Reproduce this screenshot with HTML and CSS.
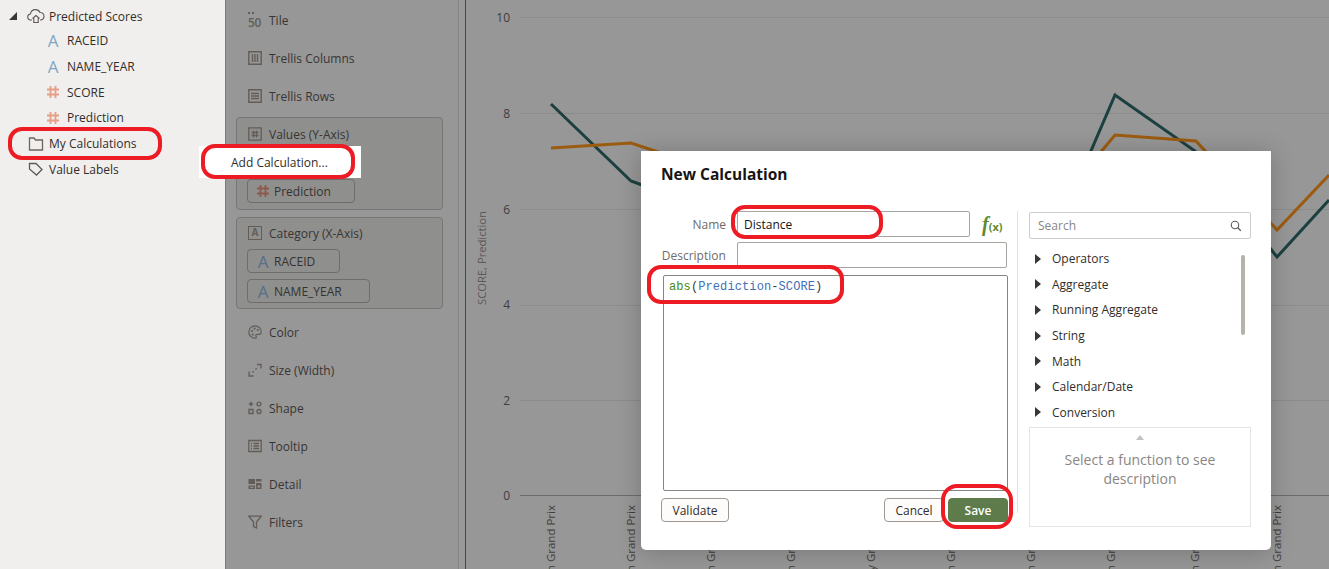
FILE: index.html
```html
<!DOCTYPE html>
<html lang="en">
<head>
    <meta charset="UTF-8">
    <title>New Calculation</title>
    <link rel="stylesheet" href="styles.css">
</head>
<body>
    <svg class="defs" width="0" height="0">
        <symbol id="hash" viewBox="0 0 14 14"><path d="M4.500 1v12M9.500 1v12M1 4.500h12M1 9.500h12" fill="none" stroke="currentColor" stroke-width="1.800"/></symbol>
    </svg>

    <aside class="data-panel">
        <div class="tree-row tree-top">
            <span class="tree-arrow"></span>
            <svg class="tree-icon" viewBox="0 0 18 16"><path d="M5 12H4a3 3 0 0 1-.5-6A5 5 0 0 1 13 4.500 3.800 3.800 0 0 1 14 12h-1M5.500 10.500 9 7.500l3.500 3M6.800 10v4.500h4.400V10" fill="none" stroke="#5f5a56" stroke-width="1.100"/></svg>
            <span>Predicted Scores</span>
        </div>
        <div class="tree-row tree-child"><span class="type-a">A</span><span>RACEID</span></div>
        <div class="tree-row tree-child"><span class="type-a">A</span><span>NAME_YEAR</span></div>
        <div class="tree-row tree-child"><svg class="type-hash"><use href="#hash"/></svg><span>SCORE</span></div>
        <div class="tree-row tree-child"><svg class="type-hash"><use href="#hash"/></svg><span>Prediction</span></div>
        <div class="tree-row">
            <svg class="tree-icon" viewBox="0 0 18 16"><path d="M2.500 14V2h4.500l1.500 2h7v10z" fill="none" stroke="#6b655f" stroke-width="1.300"/></svg>
            <span>My Calculations</span>
        </div>
        <div class="tree-row">
            <svg class="tree-icon" viewBox="0 0 18 16"><path d="M2.500 2.500h6.500l6 6-5.500 5.500-7-6z" fill="none" stroke="#5f5a56" stroke-width="1.300"/></svg>
            <span>Value Labels</span>
        </div>
    </aside>

    <section class="grammar-panel">
        <div class="drop-row">
            <span class="tile-icon">50</span>
            <span>Tile</span>
        </div>
        <div class="drop-row">
            <svg class="drop-icon" viewBox="0 0 14 14"><path d="M.8.8h12.400v12.400H.8zM4.500 3v8M7 3v8M9.500 3v8" fill="none" stroke="currentColor" stroke-width="1.400"/></svg>
            <span>Trellis Columns</span>
        </div>
        <div class="drop-row">
            <svg class="drop-icon" viewBox="0 0 14 14"><path d="M.8.8h12.400v12.400H.8zM3 4.500h8M3 7h8M3 9.500h8" fill="none" stroke="currentColor" stroke-width="1.400"/></svg>
            <span>Trellis Rows</span>
        </div>

        <div class="drop-box box-values">
            <div class="box-title">
                <svg class="drop-icon" viewBox="0 0 14 14"><path d="M.8.8h12.400v12.400H.8zM5.500 3.500v7M8.500 3.500v7M3.500 5.500h7M3.500 8.500h7" fill="none" stroke="currentColor" stroke-width="1.300"/></svg>
                <span>Values (Y-Axis)</span>
            </div>
            <div class="pill pill-hidden"></div>
            <div class="pill pill-prediction"><svg class="pill-hash"><use href="#hash"/></svg>Prediction</div>
        </div>

        <div class="drop-box box-category">
            <div class="box-title">
                <span class="a-box">A</span>
                <span>Category (X-Axis)</span>
            </div>
            <div class="pill pill-raceid"><span class="pill-a">A</span>RACEID</div>
            <div class="pill pill-name"><span class="pill-a">A</span>NAME_YEAR</div>
        </div>

        <div class="drop-row">
            <svg class="drop-icon" viewBox="0 0 14 14"><path d="M7 .8A6.200 6.200 0 1 0 7 13.200c1.600 0 1.600-1.300 1-2-.6-.9 0-1.900 1.200-1.900h2c1.300 0 2-1 2-2.300C13.200 3.500 10.500.8 7 .8z" fill="none" stroke="currentColor" stroke-width="1.200"/><circle cx="4" cy="6" r="1.100" fill="currentColor"/><circle cx="6.500" cy="3.600" r="1.100" fill="currentColor"/><circle cx="9.800" cy="5" r="1.100" fill="currentColor"/><circle cx="4.800" cy="9.500" r="1.100" fill="currentColor"/></svg>
            <span>Color</span>
        </div>
        <div class="drop-row">
            <svg class="drop-icon" viewBox="0 0 14 14"><path d="M9 1.500h4v4M1 8.500v4.500h4.500M4.500 9.500l1.200-1.200M7.500 6.500l1.200-1.200" fill="none" stroke="currentColor" stroke-width="1.300"/></svg>
            <span>Size (Width)</span>
        </div>
        <div class="drop-row">
            <svg class="drop-icon" viewBox="0 0 14 14"><path d="M3 .8v4.400M.8 3h4.400M1 8.500h4v4H1z" fill="none" stroke="currentColor" stroke-width="1.400"/><circle cx="11" cy="3" r="1.900" fill="none" stroke="currentColor" stroke-width="1.400"/><circle cx="11" cy="10.500" r="2" fill="none" stroke="currentColor" stroke-width="1.400"/></svg>
            <span>Shape</span>
        </div>
        <div class="drop-row">
            <svg class="drop-icon" viewBox="0 0 14 14"><path d="M.8 1.500h12.400v11H.8zM3 4.500h1M3 7h1M3 9.500h1M5.500 4.500h5.500M5.500 7h5.500M5.500 9.500h5.500" fill="none" stroke="currentColor" stroke-width="1.300"/></svg>
            <span>Tooltip</span>
        </div>
        <div class="drop-row">
            <svg class="drop-icon" viewBox="0 0 14 14"><path d="M.5 2h6.500v5H.5zM8 2h5.500v2.500H8zM.5 8.500H7v3.500H.5zM8 6h5.500v6H8z" fill="currentColor"/><path d="M2 9.800h3.500v1H2zM9.500 8.500H12v2H9.500z" fill="#979797"/></svg>
            <span>Detail</span>
        </div>
        <div class="drop-row">
            <svg class="drop-icon" viewBox="0 0 14 14"><path d="M.8 1.200h12.400L8.500 7v6L5.500 11.500V7z" fill="none" stroke="currentColor" stroke-width="1.300"/></svg>
            <span>Filters</span>
        </div>
    </section>
    <div class="panel-gutter"></div>

    <main class="chart">
        <svg class="chart-svg" width="863" height="569" viewBox="466 0 863 569">
            <g class="grid">
                <line x1="520" x2="1329" y1="17.500" y2="17.500"/>
                <line x1="520" x2="1329" y1="113.500" y2="113.500"/>
                <line x1="520" x2="1329" y1="209.500" y2="209.500"/>
                <line x1="520" x2="1329" y1="305.500" y2="305.500"/>
                <line x1="520" x2="1329" y1="400.500" y2="400.500"/>
            </g>
            <line class="axis" x1="520" x2="1329" y1="495.500" y2="495.500"/>
            <g class="y-ticks">
                <text x="510" y="22">10</text>
                <text x="510" y="118">8</text>
                <text x="510" y="214">6</text>
                <text x="510" y="309">4</text>
                <text x="510" y="405">2</text>
                <text x="510" y="500">0</text>
            </g>
            <text class="y-title" transform="translate(486 258) rotate(-90)">SCORE, Prediction</text>
            <polyline class="line-score" points="551,104 631,181 650,188 1075,188 1115,95 1195,151 1277,257 1329,200"/>
            <polyline class="line-prediction" points="551,148 631,143 670,156 1090,165 1115,135 1196,141 1277,230 1329,175"/>
            <g class="x-labels">
                <text transform="translate(555 505) rotate(-90)">Bahrain Grand Prix</text>
                <text transform="translate(635 505) rotate(-90)">Austrian Grand Prix</text>
                <text transform="translate(715 505) rotate(-90)">Canadian Grand Prix</text>
                <text transform="translate(795 505) rotate(-90)">Spanish Grand Prix</text>
                <text transform="translate(875 505) rotate(-90)">Hungary Grand Prix</text>
                <text transform="translate(955 505) rotate(-90)">British Grand Prix</text>
                <text transform="translate(1035 505) rotate(-90)">Belgian Grand Prix</text>
                <text transform="translate(1115 505) rotate(-90)">Italian Grand Prix</text>
                <text transform="translate(1199 505) rotate(-90)">Russian Grand Prix</text>
                <text transform="translate(1281 505) rotate(-90)">Japan Grand Prix</text>
            </g>
        </svg>
    </main>

    <div class="context-menu">Add Calculation...</div>

    <div class="dialog">
        <h2 class="dialog-title">New Calculation</h2>
        <div class="dialog-body">
            <div class="editor-col">
                <div class="field-row">
                    <label class="field-label">Name</label>
                    <div class="text-input name-input">Distance</div>
                    <span class="fx"><i>f</i><b>(x)</b></span>
                </div>
                <div class="field-row">
                    <label class="field-label">Description</label>
                    <div class="text-input desc-input"></div>
                </div>
                <div class="code-area"><span class="code-fn">abs</span>(<span class="code-col">Prediction</span>-<span class="code-col">SCORE</span>)</div>
                <div class="button-row">
                    <button class="btn">Validate</button>
                    <span class="spacer"></span>
                    <button class="btn btn-cancel">Cancel</button>
                    <button class="btn btn-save">Save</button>
                </div>
            </div>
            <div class="library-col">
                <div class="search-box">
                    <span>Search</span>
                    <svg class="search-icon" viewBox="0 0 12 12"><circle cx="5" cy="5" r="3.700" fill="none" stroke="#5f5a56" stroke-width="1.100"/><path d="M7.800 7.800l3 3" stroke="#5f5a56" stroke-width="1.300"/></svg>
                </div>
                <div class="func-list">
                    <div class="func-row"><span class="func-arrow"></span>Operators</div>
                    <div class="func-row"><span class="func-arrow"></span>Aggregate</div>
                    <div class="func-row"><span class="func-arrow"></span>Running Aggregate</div>
                    <div class="func-row"><span class="func-arrow"></span>String</div>
                    <div class="func-row"><span class="func-arrow"></span>Math</div>
                    <div class="func-row"><span class="func-arrow"></span>Calendar/Date</div>
                    <div class="func-row"><span class="func-arrow"></span>Conversion</div>
                    <div class="scroll-thumb"></div>
                </div>
                <div class="func-desc">
                    <span class="desc-caret"></span>
                    <p>Select a function to see description</p>
                </div>
            </div>
        </div>
    </div>

    <!-- red callouts drawn over the screenshot -->
    <div class="callout callout-folder"></div>
    <div class="callout callout-menu"></div>
    <div class="callout callout-name"></div>
    <div class="callout callout-code"></div>
    <div class="callout callout-save"></div>
</body>
</html>
```
FILE: styles.css
```css
* {
    box-sizing: border-box;
}
html, body {
    height: 100%;
}
body {
    margin: 0;
    display: flex;
    height: 569px;
    overflow: hidden;
    position: relative;
    font-family: "Open Sans", "Noto Sans", sans-serif;
    font-size: 12px;
    color: #2b2826;
    background-color: #979797;
}
.defs {
    position: absolute;
}

/* left data panel */
.data-panel {
    width: 225px;
    flex: none;
    padding-top: 4px;
    background-color: #f1efed;
    color: #312d2a;
}
.tree-row {
    display: flex;
    align-items: center;
    height: 25.7px;
    padding-left: 27px;
}
.tree-top {
    height: 24px;
    padding-left: 9px;
}
.tree-child {
    padding-left: 46px;
}
.tree-arrow {
    width: 0;
    height: 0;
    margin-right: 10px;
    border-left: 8px solid transparent;
    border-bottom: 8px solid #3a3633;
}
.tree-icon {
    width: 18px;
    height: 16px;
    margin-right: 4px;
}
.type-a {
    width: 14px;
    margin-right: 7px;
    font-size: 17px;
    font-weight: 500;
    text-align: center;
    color: #7ea6c4;
}
.type-hash {
    width: 14px;
    height: 14px;
    margin-right: 7px;
    color: #e59f88;
}

/* grammar panel */
.grammar-panel {
    width: 233px;
    flex: none;
    padding: 1px 15px 0 10px;
    border-left: 1px solid #7d7d7b;
    color: #383533;
}
.drop-row {
    display: flex;
    align-items: center;
    height: 38px;
    padding-left: 12px;
}
.drop-icon {
    width: 14px;
    height: 14px;
    flex: none;
    margin-right: 7px;
    color: #635d58;
}
.tile-icon {
    width: 14px;
    margin-right: 7px;
    font-size: 12px;
    font-weight: 600;
    line-height: 11px;
    letter-spacing: -0.3px;
    color: #635d58;
}
.tile-icon::before {
    content: "";
    display: block;
    width: 6px;
    height: 2px;
    margin-bottom: 1px;
    border-top: 2px dotted #635d58;
}
.box-values {
    margin-top: 2px;
}
.drop-box {
    height: 93px;
    margin-bottom: 7px;
    padding: 6px 10px 0;
    border: 1px solid #777675;
    border-radius: 4px;
    background-color: #8f8f8e;
}
.box-category {
    height: 92px;
    margin-bottom: 4px;
    padding-top: 5px;
}
.box-title {
    display: flex;
    align-items: center;
    height: 20px;
    padding-left: 1px;
}
.a-box {
    width: 14px;
    height: 14px;
    margin-right: 7px;
    border: 1.500px solid #635d58;
    font-size: 10px;
    font-weight: 700;
    line-height: 11px;
    text-align: center;
    color: #635d58;
}
.pill {
    display: flex;
    align-items: center;
    height: 24px;
    margin-top: 6px;
    padding-left: 8px;
    border: 1px solid #6e6d6c;
    border-radius: 4px;
    color: #35322f;
}
.pill-hidden {
    width: 60px;
    margin-top: 5px;
}
.pill-prediction {
    width: 108px;
}
.pill-raceid {
    width: 93px;
}
.pill-name {
    width: 123px;
}
.pill-hash {
    width: 14px;
    height: 14px;
    margin-right: 4px;
    color: #8c5a4a;
}
.pill-a {
    width: 14px;
    margin-right: 4px;
    font-size: 17px;
    font-weight: 500;
    text-align: center;
    color: #557088;
}
.panel-gutter {
    width: 8px;
    flex: none;
    background-color: #999998;
    border-left: 1px solid #858584;
    border-right: 1px solid #3f4c3c;
}

/* chart */
.chart {
    flex: 1;
}
.chart-svg {
    display: block;
    font-size: 12px;
}
.grid line {
    stroke: #8b8b8a;
}
.axis {
    stroke: #6c6c6b;
}
.y-ticks text {
    text-anchor: end;
    fill: #403d3b;
}
.y-title {
    text-anchor: middle;
    font-size: 11.2px;
    fill: #5b5856;
}
.x-labels text {
    text-anchor: end;
    font-size: 11.500px;
    fill: #403d3b;
}
.line-score, .line-prediction {
    fill: none;
    stroke-width: 3;
}
.line-score {
    stroke: #1c4040;
}
.line-prediction {
    stroke: #9c5c10;
}

/* context menu */
.context-menu {
    position: absolute;
    left: 199px;
    top: 146px;
    width: 162px;
    height: 32px;
    padding-left: 32px;
    line-height: 33px;
    color: #312d2a;
    background-color: #fff;
}

/* dialog */
.dialog {
    position: absolute;
    left: 641px;
    top: 151px;
    width: 630px;
    height: 399px;
    padding: 13px 20px 0;
    background-color: #fff;
    border-radius: 0 0 5px 5px;
    box-shadow: 0 2px 24px rgba(0, 0, 0, 0.22);
}
.dialog-title {
    margin: 0 0 27px;
    font-size: 15.500px;
    font-weight: 700;
    line-height: 20px;
    color: #161513;
}
.dialog-body {
    display: flex;
}
.editor-col {
    width: 357px;
    padding-right: 10px;
    border-right: 1px solid #e4e2e0;
    height: 302px;
}
.field-row {
    display: flex;
    align-items: center;
    margin-bottom: 5px;
}
.field-label {
    width: 65px;
    margin-right: 11px;
    text-align: right;
    color: #6f6b68;
}
.text-input {
    height: 26px;
    padding-left: 6px;
    border: 1px solid #a8a49f;
    border-radius: 2px;
    line-height: 25px;
    color: #161513;
}
.name-input {
    width: 233px;
}
.desc-input {
    width: 271px;
}
.fx {
    margin-left: 12px;
    color: #5f8a2f;
}
.fx i {
    font-family: "Liberation Serif", serif;
    font-size: 20px;
    font-weight: 700;
}
.fx b {
    font-size: 11px;
}
.code-area {
    width: 345px;
    height: 216px;
    margin: 7px 0 7px 2px;
    padding: 4px 5px;
    border: 1px solid #8a8580;
    border-radius: 2px;
    font-family: "Liberation Mono", monospace;
    font-size: 12px;
    letter-spacing: 0.1px;
    color: #3d3a38;
}
.code-fn {
    color: #4a8a10;
}
.code-col {
    color: #3f6fb5;
}
.button-row {
    display: flex;
    width: 347px;
}
.spacer {
    flex: 1;
}
.btn {
    height: 24px;
    padding: 0;
    font-family: inherit;
    font-size: 12px;
    color: #312d2a;
    background-color: #fdfcfb;
    border: 1px solid #9e9892;
    border-radius: 4px;
}
.btn:first-child {
    width: 68px;
}
.btn-cancel {
    width: 60px;
    margin-right: 4px;
}
.btn-save {
    width: 60px;
    font-weight: 600;
    color: #fff;
    background-color: #5e7b4c;
    border-color: #5e7b4c;
}
.library-col {
    width: 222px;
    margin-left: 11px;
}
.search-box {
    display: flex;
    align-items: center;
    justify-content: space-between;
    height: 27px;
    margin-top: 1px;
    padding: 0 8px;
    border: 1px solid #cfcdcb;
    border-radius: 2px;
    color: #8a8683;
}
.search-icon {
    width: 12px;
    height: 12px;
}
.func-list {
    position: relative;
    height: 188px;
    padding-top: 7px;
}
.func-row {
    display: flex;
    align-items: center;
    height: 25.6px;
    color: #312d2a;
}
.func-arrow {
    width: 0;
    height: 0;
    margin: 0 11px 0 6px;
    border-top: 5px solid transparent;
    border-bottom: 5px solid transparent;
    border-left: 6px solid #3a3633;
}
.scroll-thumb {
    position: absolute;
    right: 6px;
    top: 16px;
    width: 4px;
    height: 80px;
    border-radius: 2px;
    background-color: #b5b1ad;
}
.func-desc {
    display: flex;
    flex-direction: column;
    align-items: center;
    height: 100px;
    padding-top: 7px;
    border: 1px solid #e6e4e2;
}
.desc-caret {
    width: 0;
    height: 0;
    border-left: 4px solid transparent;
    border-right: 4px solid transparent;
    border-bottom: 5px solid #c4c1be;
}
.func-desc p {
    margin: 10px 0 0;
    width: 180px;
    font-size: 14px;
    line-height: 19px;
    text-align: center;
    color: #8a8683;
}

/* callouts */
.callout {
    position: absolute;
    border: 4px solid #ed1c24;
    border-radius: 14px;
}
.callout-folder {
    left: 8px;
    top: 127px;
    width: 154px;
    height: 33px;
}
.callout-menu {
    left: 201px;
    top: 144px;
    width: 154px;
    height: 35px;
}
.callout-name {
    left: 731px;
    top: 205px;
    width: 152px;
    height: 34px;
}
.callout-code {
    left: 647px;
    top: 265px;
    width: 197px;
    height: 39px;
}
.callout-save {
    left: 941px;
    top: 484px;
    width: 72px;
    height: 45px;
    border-radius: 16px;
}
```
